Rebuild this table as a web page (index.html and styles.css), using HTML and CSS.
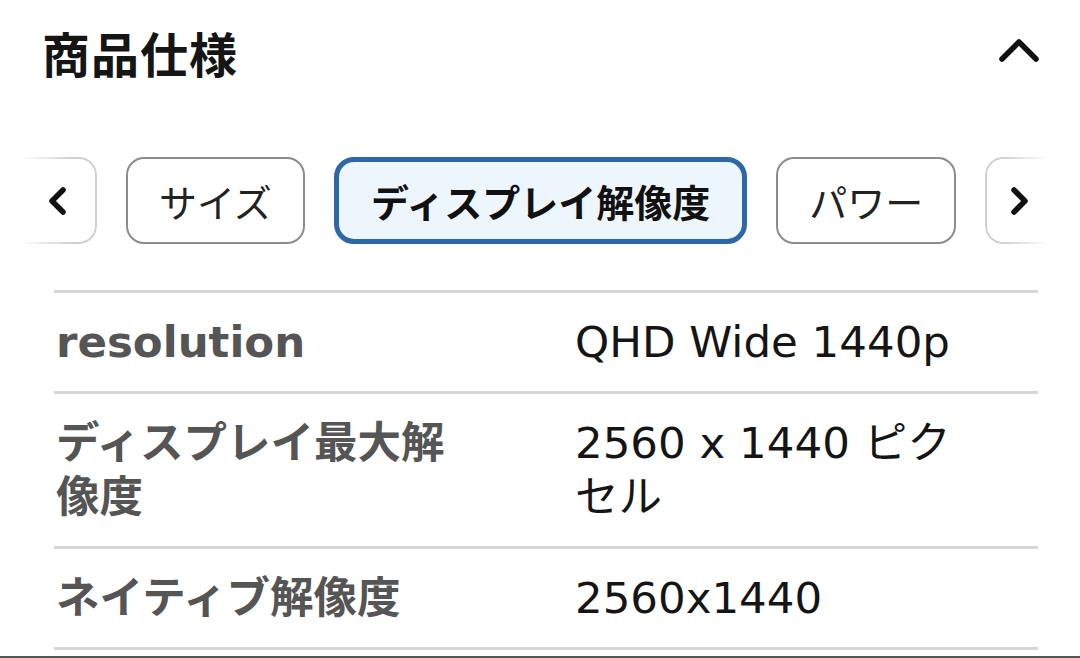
FILE: index.html
```html
<!DOCTYPE html>
<html lang="ja">
<head>
<meta charset="utf-8">
<link rel="stylesheet" href="styles.css">
</head>
<body>
<div class="page">
  <header class="header">
    <h2 class="title">商品仕様</h2>
    <button class="collapse" aria-label="閉じる">
      <svg width="42" height="28" viewBox="0 0 42 28"><path d="M4 24 L21 7 L38 24" fill="none" stroke="#111" stroke-width="5.5" stroke-linecap="round" stroke-linejoin="round"/></svg>
    </button>
  </header>

  <nav class="tabs">
    <button class="nav nav-prev" aria-label="前へ">
      <svg width="22" height="28" viewBox="0 0 22 28"><path d="M17 3 L6 14 L17 25" fill="none" stroke="#111" stroke-width="5.5" stroke-linecap="round" stroke-linejoin="round"/></svg>
    </button>
    <button class="tab">サイズ</button>
    <button class="tab active">ディスプレイ解像度</button>
    <button class="tab">パワー</button>
    <button class="nav nav-next" aria-label="次へ">
      <svg width="22" height="28" viewBox="0 0 22 28"><path d="M5 3 L16 14 L5 25" fill="none" stroke="#111" stroke-width="5.5" stroke-linecap="round" stroke-linejoin="round"/></svg>
    </button>
  </nav>

  <dl class="specs">
    <div class="row">
      <dt class="label">resolution</dt>
      <dd class="value">QHD Wide 1440p</dd>
    </div>
    <div class="row">
      <dt class="label">ディスプレイ最大解像度</dt>
      <dd class="value">2560 x 1440 ピクセル</dd>
    </div>
    <div class="row">
      <dt class="label">ネイティブ解像度</dt>
      <dd class="value">2560x1440</dd>
    </div>
  </dl>
</div>
<div class="bottom-bar"></div>
</body>
</html>
```

FILE: styles.css
```css
* {
  box-sizing: border-box;
}

html, body {
  margin: 0;
  padding: 0;
  background: #fff;
}

body {
  font-family: "DejaVu Sans", "Noto Sans CJK JP", sans-serif;
  color: #111;
  width: 1080px;
  height: 658px;
  overflow: hidden;
  display: flex;
  flex-direction: column;
}

.page {
  flex: 1;
}

.header {
  height: 112px;
  display: flex;
  align-items: center;
  justify-content: space-between;
  padding: 0 40px 8px 42px;
}

.title {
  margin: 0;
  font-family: "Noto Sans CJK JP", sans-serif;
  font-size: 48px;
  font-weight: 700;
  line-height: 1;
  letter-spacing: 1px;
  color: #151515;
}

.collapse {
  border: 0;
  background: none;
  padding: 0;
  display: flex;
  margin-top: -6px;
}

.tabs {
  margin-top: 45px;
  height: 87px;
  display: flex;
  align-items: stretch;
  gap: 29px;
  overflow: hidden;
}

.tab {
  flex: none;
  font-family: "Noto Sans CJK JP", sans-serif;
  font-size: 38px;
  color: #222;
  background: #fff;
  border: 2px solid #8c8c8c;
  border-radius: 18px;
  padding: 0 31px;
  line-height: 1;
}

.tab.active {
  border: 5px solid #2d67a6;
  background: #edf5fd;
  border-radius: 20px;
  font-weight: 700;
  color: #111;
  padding: 0 32px;
}

.nav {
  flex: none;
  position: relative;
  width: 117px;
  background: none;
  border: 0;
  padding: 0;
  display: flex;
  align-items: center;
}

.nav::before {
  content: "";
  position: absolute;
  inset: 0;
  border: 2px solid #cfcfcf;
  border-radius: 18px;
}

.nav svg {
  position: relative;
}

.nav-prev {
  margin-left: -20px;
  justify-content: flex-end;
  padding-right: 29px;
}

.nav-prev::before {
  -webkit-mask-image: linear-gradient(to right, transparent 35%, #000 80%);
  mask-image: linear-gradient(to right, transparent 35%, #000 80%);
}

.nav-next {
  justify-content: flex-start;
  padding-left: 24px;
}

.nav-next::before {
  -webkit-mask-image: linear-gradient(to left, transparent 45%, #000 85%);
  mask-image: linear-gradient(to left, transparent 45%, #000 85%);
}

.specs {
  margin: 46px 42px 0 54px;
  border-bottom: 3px solid #d6d6d6;
}

.row {
  display: grid;
  grid-template-columns: 521px 1fr;
  border-top: 3px solid #d6d6d6;
  padding: 22px 0;
  align-items: center;
}

.label,
.value {
  margin: 0;
  font-size: 43.5px;
  line-height: 54px;
}

.label {
  padding: 0 90px 0 2px;
  color: #555;
  font-weight: 700;
}

.value {
  padding-right: 60px;
  color: #151515;
}

.bottom-bar {
  height: 2px;
  background: #555;
}
```
